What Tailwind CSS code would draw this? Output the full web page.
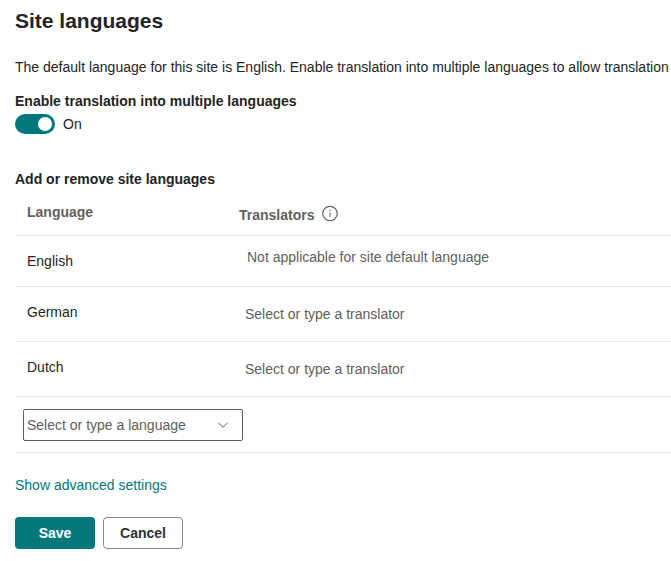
<!DOCTYPE html>
<html lang="en">
<head>
  <meta charset="UTF-8" />
  <meta name="viewport" content="width=device-width, initial-scale=1" />
  <title>Site languages</title>
  <script src="https://cdn.jsdelivr.net/npm/@tailwindcss/browser@4"></script>
</head>
<body class="bg-white font-['Liberation_Sans',Arial,sans-serif] text-sm/5 text-[#242424]">
  <main class="overflow-x-hidden pt-[7px] pb-3 pl-[15px]">
    <h1 class="text-[21px]/7 font-bold">Site languages</h1>
    <p class="mt-[22px] whitespace-nowrap">The default language for this site is English. Enable translation into multiple languages to allow translation</p>

    <!-- Translation toggle -->
    <label for="enableTranslation" class="mt-3.5 block font-bold">Enable translation into multiple languages</label>
    <div class="mt-[3px] flex items-center gap-2">
      <input id="enableTranslation" type="checkbox" role="switch" checked class="peer sr-only" />
      <label for="enableTranslation" aria-label="Toggle translation" class="flex h-5 w-10 cursor-pointer items-center rounded-full bg-[#8a8886] px-[3px] peer-checked:justify-end peer-checked:bg-[#03787c]">
        <span class="size-3.5 rounded-full bg-white"></span>
      </label>
      <span>On</span>
    </div>

    <!-- Languages table -->
    <h2 class="mt-[35px] font-bold">Add or remove site languages</h2>
    <table class="w-full border-collapse text-left">
      <thead class="text-[#616161]">
        <tr class="h-[46px] border-b border-[#e8e8e8] align-top">
          <th class="w-[212px] px-3 pt-[13px]">Language</th>
          <th class="px-3 pt-4">
            <div class="flex gap-2">
              Translators
              <button type="button" aria-label="About translators" class="size-4">
                <svg viewBox="0 0 16 16" class="size-4" fill="none" stroke="currentColor">
                  <circle cx="8" cy="8.5" r="7.2" stroke-width="1.2" />
                  <path d="M8 7.5v4.5" />
                  <circle cx="8" cy="5.5" r=".7" fill="currentColor" stroke="none" />
                </svg>
              </button>
            </div>
          </th>
        </tr>
      </thead>
      <tbody>
        <tr class="h-[51px] border-b border-[#e8e8e8] align-top">
          <td class="px-3 pt-[15px]">English</td>
          <td class="pt-[11px] pl-5 text-[#616161]">Not applicable for site default language</td>
        </tr>
        <tr class="h-[55px] border-b border-[#e8e8e8] align-top">
          <td class="px-3 pt-[15px]">German</td>
          <td class="px-3 pt-[11px]">
            <input type="text" aria-label="German translators" placeholder="Select or type a translator" class="block h-8 w-full px-1.5 placeholder:text-[#605e5c]" />
          </td>
        </tr>
        <tr class="h-[55px] border-b border-[#e8e8e8] align-top">
          <td class="px-3 pt-[15px]">Dutch</td>
          <td class="px-3 pt-[11px]">
            <input type="text" aria-label="Dutch translators" placeholder="Select or type a translator" class="block h-8 w-full px-1.5 placeholder:text-[#605e5c]" />
          </td>
        </tr>
        <tr class="h-14 border-b border-[#e8e8e8] align-top">
          <td colspan="2" class="px-2 pt-3">
            <div class="flex h-8 w-[220px] items-center rounded-xs border border-[#605e5c] pr-3.5 pl-[3px]">
              <input type="text" role="combobox" aria-expanded="false" aria-label="Language" placeholder="Select or type a language" class="h-full min-w-0 flex-1 placeholder:text-[#605e5c]" />
              <button type="button" aria-label="Show languages">
                <svg viewBox="0 0 10 10" class="size-2.5" fill="none" stroke="#616161">
                  <path d="M.5 2.8 5 7.3l4.5-4.5" />
                </svg>
              </button>
            </div>
          </td>
        </tr>
      </tbody>
    </table>

    <a href="#" class="mt-[22px] block w-fit text-[#03787c]">Show advanced settings</a>

    <div class="mt-[22px] flex gap-2">
      <button type="button" class="h-8 w-20 rounded-sm bg-[#03787c] font-bold text-white">Save</button>
      <button type="button" class="h-8 w-20 rounded-sm border border-[#8a8886] font-bold text-[#323130]">Cancel</button>
    </div>
  </main>
</body>
</html>
